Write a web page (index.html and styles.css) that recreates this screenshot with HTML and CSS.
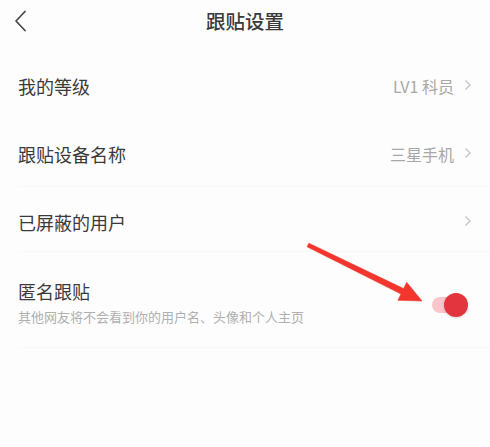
FILE: index.html
```html
<!DOCTYPE html>
<html lang="zh-CN">
<head>
    <meta charset="UTF-8">
    <meta name="viewport" content="width=device-width, initial-scale=1.0">
    <title>跟贴设置</title>
    <link rel="stylesheet" href="styles.css">
</head>
<body>
    <div class="page">
        <div class="header">
            <svg class="back" width="14" height="22" viewBox="0 0 14 22">
                <polyline points="11,1.5 2,11 11,20.5" fill="none" stroke="#4a4a4a" stroke-width="1.8" stroke-linecap="round" stroke-linejoin="round"/>
            </svg>
            <h1 class="title">跟贴设置</h1>
        </div>

        <div class="row row-level">
            <span class="label">我的等级</span>
            <span class="value">LV1 科员</span>
            <svg class="arrow-right" width="8" height="12" viewBox="0 0 8 12"><polyline points="1.5,1.5 6,6 1.5,10.5" fill="none" stroke="#c4c4c4" stroke-width="1.4"/></svg>
        </div>
        <div class="row row-device">
            <span class="label">跟贴设备名称</span>
            <span class="value">三星手机</span>
            <svg class="arrow-right" width="8" height="12" viewBox="0 0 8 12"><polyline points="1.5,1.5 6,6 1.5,10.5" fill="none" stroke="#c4c4c4" stroke-width="1.4"/></svg>
        </div>
        <div class="row row-blocked">
            <span class="label">已屏蔽的用户</span>
            <span class="value"></span>
            <svg class="arrow-right" width="8" height="12" viewBox="0 0 8 12"><polyline points="1.5,1.5 6,6 1.5,10.5" fill="none" stroke="#c4c4c4" stroke-width="1.4"/></svg>
        </div>
        <div class="row row-anon">
            <div class="text-block">
                <span class="label">匿名跟贴</span>
                <span class="desc">其他网友将不会看到你的用户名、头像和个人主页</span>
            </div>
            <div class="switch on">
                <span class="knob"></span>
            </div>
        </div>
    </div>

    <!-- red annotation arrow -->
    <svg class="pointer" width="490" height="447" viewBox="0 0 490 447">
        <polygon points="307.1,246.8 308.9,243.2 403.6,288.6 406.7,282.3 422,301 397.9,300.3 401,294" fill="#f2362e" stroke="#f2362e" stroke-width="0.6" stroke-linejoin="round"/>
    </svg>
</body>
</html>
```

FILE: styles.css
```css
body {
    margin: 0;
    background-color: #fdfdfd;
    font-family: "Noto Sans CJK SC", "Noto Sans", sans-serif;
    color: #333;
}
.page {
    width: 490px;
}
.header {
    height: 52px;
    display: flex;
    align-items: flex-start;
    justify-content: center;
    position: relative;
}
.back {
    position: absolute;
    left: 14px;
    top: 10px;
}
.title {
    margin: 7px 0 0 0;
    font-size: 19.5px;
    font-weight: 500;
    line-height: 28px;
    color: #3a3a3a;
}
.row {
    display: flex;
    align-items: center;
    margin-left: 18px;
    padding: 0 18px 0 0;
    border-bottom: 1px solid #f8f8f8;
    box-sizing: border-box;
}
.row-level {
    height: 66px;
    padding-top: 2px;
    border-bottom-color: #fdfdfd;
}
.row-device {
    height: 69px;
    padding-top: 4px;
}
.row-blocked {
    height: 65px;
    padding-top: 5px;
}
.row-anon {
    height: 96px;
    padding-top: 6px;
    padding-right: 25px;
}
.label {
    flex: 1;
    font-size: 18px;
    line-height: 24px;
    color: #3a3a3a;
}
.value {
    font-size: 16px;
    color: #a8a8a8;
    margin-right: 10px;
}
.arrow-right {
    margin-top: -2px;
}
.text-block {
    flex: 1;
    display: flex;
    flex-direction: column;
}
.desc {
    margin-top: 5px;
    font-size: 13px;
    line-height: 18px;
    color: #b0b0b0;
}
.switch {
    position: relative;
    width: 33px;
    height: 16px;
    border-radius: 8px;
    background-color: #f9c6ca;
    margin-top: 4px;
}
.knob {
    position: absolute;
    right: -3px;
    top: -4px;
    width: 24px;
    height: 24px;
    border-radius: 50%;
    background-color: #e2353d;
    box-shadow: 0 1px 3px rgba(0, 0, 0, 0.15);
}
.pointer {
    position: absolute;
    left: 0;
    top: 0;
}
```
